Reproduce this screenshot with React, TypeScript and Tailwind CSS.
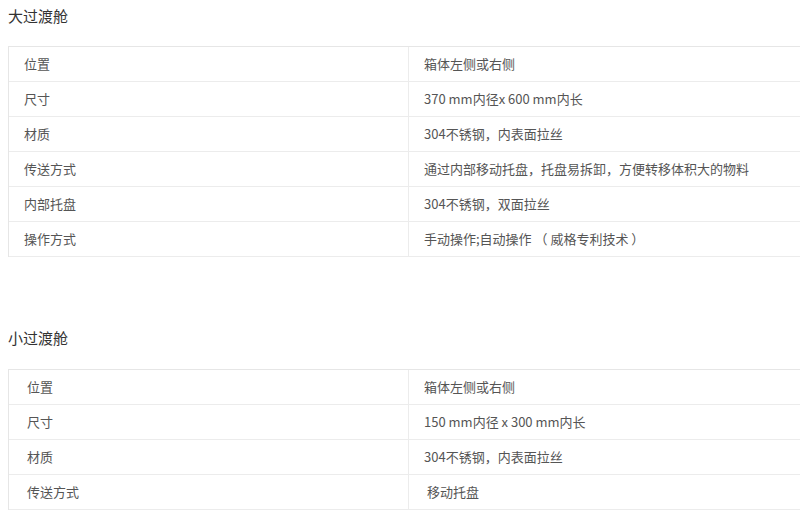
import React from "react";

const t1: [string, string][] = [
  ["位置", "箱体左侧或右侧"],
  ["尺寸", "370 mm内径x 600 mm内长"],
  ["材质", "304不锈钢，内表面拉丝"],
  ["传送方式", "通过内部移动托盘，托盘易拆卸，方便转移体积大的物料"],
  ["内部托盘", "304不锈钢，双面拉丝"],
  ["操作方式", "手动操作;自动操作 （ 威格专利技术 ）"],
];
const t2: [string, string][] = [
  ["位置", "箱体左侧或右侧"],
  ["尺寸", "150 mm内径 x 300 mm内长"],
  ["材质", "304不锈钢，内表面拉丝"],
  ["传送方式", " 移动托盘"],
];

function Table({ rows, indent }: { rows: [string, string][]; indent?: boolean }) {
  return (
    <div className="ml-2 w-[820px] border-t border-l border-[#e6e6e6]">
      {rows.map(([a, b], i) => (
        <div key={i} className="flex h-[35px] border-b border-[#ececec] items-center text-[13px] text-[#555]">
          <div className={`w-[400px] h-full flex items-center border-r border-[#ececec] ${indent ? "pl-[18px]" : "pl-[15px]"}`}>{a}</div>
          <div className="flex-1 whitespace-pre pl-[15px]">{b}</div>
        </div>
      ))}
    </div>
  );
}

export default function App() {
  return (
    <div className="w-[800px] h-[512px] overflow-hidden bg-white" style={{ fontFamily: '"Microsoft YaHei","Noto Sans CJK SC",sans-serif' }}>
      <div className="pt-[5px] pl-2 text-[15px] text-[#333] h-[46px]">大过渡舱</div>
      <Table rows={t1} />
      <div className="h-[112px] pl-2 flex items-end pb-[20px] text-[15px] text-[#333]">小过渡舱</div>
      <Table rows={t2} indent />
    </div>
  );
}
